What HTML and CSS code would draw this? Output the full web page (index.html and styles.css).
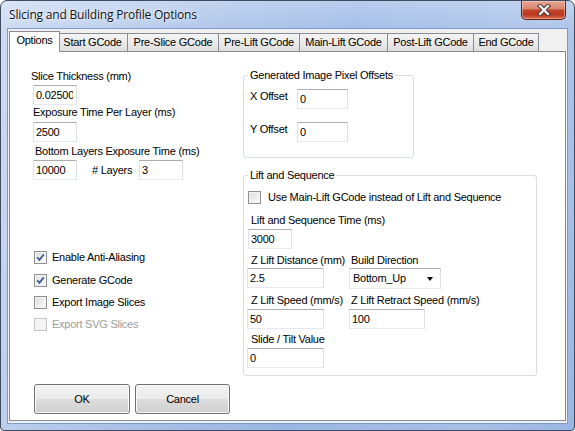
FILE: index.html
```html
<!DOCTYPE html>
<html>
<head>
<meta charset="utf-8">
<link rel="stylesheet" href="styles.css">
</head>
<body>
<div class="window">
  <div class="titlebar">
    <span class="title">Slicing and Building Profile Options</span>
    <div class="close">
      <svg width="14" height="12" viewBox="0 0 14 12"><path d="M3 2 L11 10 M11 2 L3 10" stroke="#4a3a3a" stroke-width="4.2" stroke-linecap="square" fill="none"/><path d="M3 2 L11 10 M11 2 L3 10" stroke="#ffffff" stroke-width="2.2" stroke-linecap="square" fill="none"/></svg>
    </div>
  </div>
  <div class="client">
    <div class="tabs">
      <div class="tab sel t-opt">Options</div>
      <div class="tab t-start">Start GCode</div>
      <div class="tab t-pslice">Pre-Slice GCode</div>
      <div class="tab t-plift">Pre-Lift GCode</div>
      <div class="tab t-mlift">Main-Lift GCode</div>
      <div class="tab t-postlift">Post-Lift GCode</div>
      <div class="tab t-end">End GCode</div>
    </div>
    <div class="panel">
      <div class="left">
        <div class="lbl lb1">Slice Thickness (mm)</div>
        <input class="tb w44 in1" value="0.02500">
        <div class="lbl lb2">Exposure Time Per Layer (ms)</div>
        <input class="tb w44 in2" value="2500">
        <div class="lbl lb3">Bottom Layers Exposure Time (ms)</div>
        <div class="layer-row">
          <input class="tb w44" value="10000">
          <span class="lbl layers-lbl">#&nbsp;Layers</span>
          <input class="tb w44" value="3">
        </div>
        <div class="checks">
          <div class="chk">
            <span class="cb"><svg width="11" height="11" viewBox="0 0 11 11"><path d="M2.2 5.2 L4.4 7.8 L8.8 2.4" stroke="#3d5a94" stroke-width="1.7" fill="none"/></svg></span>
            <span class="chk-lbl">Enable Anti-Aliasing</span>
          </div>
          <div class="chk c2">
            <span class="cb"><svg width="11" height="11" viewBox="0 0 11 11"><path d="M2.2 5.2 L4.4 7.8 L8.8 2.4" stroke="#3d5a94" stroke-width="1.7" fill="none"/></svg></span>
            <span class="chk-lbl">Generate GCode</span>
          </div>
          <div class="chk">
            <span class="cb"></span>
            <span class="chk-lbl">Export Image Slices</span>
          </div>
          <div class="chk dis">
            <span class="cb"></span>
            <span class="chk-lbl">Export SVG Slices</span>
          </div>
        </div>
        <div class="buttons">
          <button class="btn ok">OK</button>
          <button class="btn cancel">Cancel</button>
        </div>
      </div>
      <div class="right">
        <fieldset class="grp g1">
          <legend>Generated Image Pixel Offsets</legend>
          <div class="off-row">
            <span class="lbl off-lbl">X Offset</span>
            <input class="tb w51" value="0">
          </div>
          <div class="off-row r2">
            <span class="lbl off-lbl">Y Offset</span>
            <input class="tb w51" value="0">
          </div>
        </fieldset>
        <fieldset class="grp g2">
          <legend>Lift and Sequence</legend>
          <div class="chk">
            <span class="cb"></span>
            <span class="chk-lbl">Use Main-Lift GCode instead of Lift and Sequence</span>
          </div>
          <div class="lbl g2l1">Lift and Sequence Time (ms)</div>
          <input class="tb w44 g2in1" value="3000">
          <div class="pair lblrow r-a">
            <span class="lbl c1">Z Lift Distance (mm)</span>
            <span class="lbl">Build Direction</span>
          </div>
          <div class="pair inrow r-b">
            <input class="tb w77 c1in" value="2.5">
            <div class="combo"><span>Bottom_Up</span><i class="arrow"></i></div>
          </div>
          <div class="pair lblrow r-c">
            <span class="lbl c1">Z Lift Speed (mm/s)</span>
            <span class="lbl">Z Lift Retract Speed (mm/s)</span>
          </div>
          <div class="pair inrow r-d">
            <input class="tb w77 c1in" value="50">
            <input class="tb w76" value="100">
          </div>
          <div class="lbl g2l5">Slide / Tilt Value</div>
          <input class="tb w77 g2in5" value="0">
        </fieldset>
      </div>
    </div>
  </div>
</div>
</body>
</html>
```

FILE: styles.css
```css
html, body {
  margin: 0;
  padding: 0;
}
body {
  width: 575px;
  height: 431px;
  overflow: hidden;
  background: #ffffff;
  font-family: "Liberation Sans", Arial, sans-serif;
  font-size: 11px;
  letter-spacing: -0.25px;
  color: #000;
}
.window {
  box-sizing: border-box;
  width: 575px;
  height: 431px;
  border: 1px solid #3f4b5e;
  border-radius: 7px 7px 4px 4px;
  padding: 0 7px 7px 7px;
  display: flex;
  flex-direction: column;
  background:
    linear-gradient(100deg, rgba(255,255,255,0.45) 0%, rgba(255,255,255,0.15) 30%, rgba(255,255,255,0) 55%, rgba(255,255,255,0.12) 85%, rgba(255,255,255,0) 100%),
    linear-gradient(180deg, #b9cdee 0px, #a6bfe7 28px, #9bb6e3 100%);
}
.titlebar {
  height: 28px;
  flex: none;
  display: flex;
  justify-content: space-between;
  align-items: flex-start;
}
.title {
  font-family: "Open Sans", "Noto Sans", sans-serif;
  font-size: 12px;
  letter-spacing: -0.2px;
  line-height: 16px;
  margin-top: 6px;
  padding-left: 1px;
  color: #111;
  text-shadow: 0 0 6px rgba(255,255,255,0.9), 0 0 2px rgba(255,255,255,0.8);
}
.close {
  box-sizing: border-box;
  width: 45px;
  height: 19px;
  margin-right: 1px;
  border: 1px solid #5e2218;
  border-top: none;
  border-radius: 0 0 5px 5px;
  background: linear-gradient(180deg, #e7a593 0%, #d8866f 42%, #c4432b 52%, #b93a22 75%, #d66a4f 100%);
  box-shadow: inset 0 0 0 1px rgba(255,220,210,0.45);
  display: flex;
  align-items: center;
  justify-content: center;
}
.client {
  flex: 1;
  display: flex;
  flex-direction: column;
  background: #f0f0f0;
  box-shadow: 0 0 0 1px #7e9ac6;
}
.tabs {
  height: 22px;
  flex: none;
  display: flex;
  align-items: flex-end;
  padding-left: 3px;
}
.tab {
  box-sizing: border-box;
  height: 18px;
  border: 1px solid #898c95;
  border-bottom: none;
  margin-left: -1px;
  padding-top: 2px;
  line-height: 13px;
  text-align: center;
  white-space: nowrap;
  background: linear-gradient(180deg, #f4f4f4 0%, #ebebeb 50%, #dedede 100%);
}
.tab.sel {
  position: relative;
  z-index: 1;
  height: 21px;
  margin: 0 -2px -1px -2px;
  background: #ffffff;
}
.t-opt { width: 51px; }
.t-start { width: 71px; }
.t-pslice { width: 92px; }
.t-plift { width: 82px; }
.t-mlift { width: 89px; }
.t-postlift { width: 87px; }
.t-end { width: 66px; }
.panel {
  flex: 1;
  display: flex;
  margin: 0 1px 2px 1px;
  border: 1px solid #898c95;
  background: #ffffff;
}
.lbl {
  line-height: 13px;
  white-space: nowrap;
}
.tb {
  box-sizing: border-box;
  height: 20px;
  margin: 0;
  border: 1px solid;
  border-color: #abadb3 #dbdfe6 #e3e9ef #e2e3ea;
  padding: 0 0 0 2px;
  font-family: "Liberation Sans", Arial, sans-serif;
  font-size: 11px;
  letter-spacing: -0.25px;
  color: #000;
  background: #fff;
  outline: none;
  display: block;
}
.w44 { width: 44px; }
.w51 { width: 51px; }
.w77 { width: 77px; }
.w76 { width: 76px; }

.left {
  box-sizing: border-box;
  width: 233px;
  flex: none;
  padding: 18px 0 0 23px;
  display: flex;
  flex-direction: column;
  align-items: flex-start;
}
.lb1 { margin-left: -2px; }
.in1 { margin-top: 2px; padding-right: 3px; }
.lb2 { margin-top: 1px; margin-left: 0; }
.in2 { margin-top: 3px; }
.lb3 { margin-top: 3px; margin-left: 2px; }
.layer-row {
  margin-top: 2px;
  display: flex;
  align-items: center;
}
.layers-lbl {
  margin-left: 15px;
  width: 47px;
}
.checks {
  margin-top: 71px;
  margin-left: 1px;
  display: flex;
  flex-direction: column;
  gap: 9px;
}
.chk {
  display: flex;
  align-items: center;
  height: 13px;
}
.chk.c2 { margin-top: 1px; }
.cb {
  box-sizing: border-box;
  width: 13px;
  height: 13px;
  flex: none;
  border: 1px solid #8e8f8f;
  background: linear-gradient(135deg, #dcdcdc 0%, #f0f0f0 60%, #fbfbfb 100%);
  box-shadow: inset 0 0 0 1px #f4f4f4;
  display: flex;
  align-items: center;
  justify-content: center;
}
.cb svg { display: block; }
.chk-lbl {
  margin-left: 5px;
  line-height: 13px;
  white-space: nowrap;
}
.chk.dis .cb {
  border-color: #c5c5c5;
  background: #f4f4f4;
  box-shadow: none;
}
.chk.dis .chk-lbl { color: #9d9d9d; }
.buttons {
  margin-top: 53px;
  margin-left: 1px;
  display: flex;
  gap: 5px;
}
.btn {
  box-sizing: border-box;
  height: 30px;
  margin: 0;
  padding: 0;
  border: 1px solid #707070;
  border-radius: 3px;
  background: linear-gradient(180deg, #f2f2f2 0%, #ebebeb 49%, #dddddd 51%, #cfcfcf 100%);
  box-shadow: inset 0 0 0 1px #fbfbfb;
  font-family: "Liberation Sans", Arial, sans-serif;
  font-size: 11px;
  letter-spacing: -0.25px;
  color: #000;
}
.btn.ok { width: 96px; }
.btn.cancel { width: 95px; }

.right {
  padding-top: 17px;
  display: flex;
  flex-direction: column;
  align-items: flex-start;
}
.grp {
  margin: 0;
  min-width: 0;
  border: 1px solid #d5dfe5;
  border-radius: 3px;
  box-sizing: border-box;
}
.grp legend {
  padding: 0 2px;
  line-height: 13px;
}
.g1 {
  width: 171px;
  padding: 7px 0 15px 6px;
}
.g1 legend { margin-left: -2px; }
.off-row {
  display: flex;
  align-items: flex-start;
}
.off-row.r2 { margin-top: 13px; }
.off-lbl {
  width: 47px;
  margin-top: 1px;
}
.g2 {
  width: 294px;
  margin-top: 11px;
  padding: 9px 0 7px 4px;
}
.g2 legend { margin-left: 0; }
.g2 .chk-lbl { margin-left: 7px; }
.g2l1 { margin-top: 10px; margin-left: 3px; }
.g2in1 { margin-top: 2px; }
.pair {
  display: flex;
  align-items: flex-start;
}
.lblrow .c1 { width: 100px; margin-left: 3px; }
.inrow .c1in { margin-left: -1px; margin-right: 25px; }
.r-a { margin-top: 5px; }
.r-b { margin-top: 1px; }
.r-c { margin-top: 5px; }
.r-d { margin-top: 2px; }
.g2l5 { margin-top: 4px; margin-left: 3px; }
.g2in5 { margin-top: 2px; margin-left: -1px; }
.combo {
  box-sizing: border-box;
  width: 92px;
  height: 21px;
  border: 1px solid;
  border-color: #abadb3 #dbdfe6 #e3e9ef #e2e3ea;
  background: #fff;
  display: flex;
  align-items: center;
  justify-content: space-between;
  padding: 0 7px 0 3px;
  line-height: 13px;
}
.arrow {
  width: 0;
  height: 0;
  border-left: 3.5px solid transparent;
  border-right: 3.5px solid transparent;
  border-top: 4px solid #000;
}
```
